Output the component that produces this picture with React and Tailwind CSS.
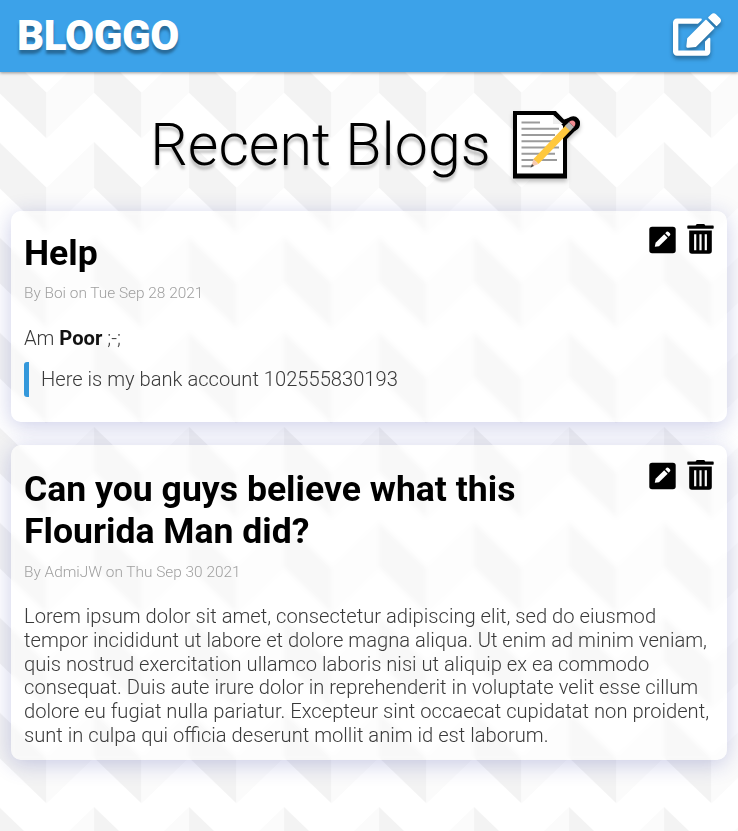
import React from "react";
import { FaEdit } from "react-icons/fa";

function Backdrop() {
  return (
    <svg className="absolute inset-0 h-full w-full" aria-hidden="true">
      <defs>
        <pattern id="chevrons" x="-0.9" y="47" width="95" height="95" patternUnits="userSpaceOnUse">
          <path d="M0 0L47.5 45.7V91.4L0 45.7Z" fill="#f3f3f3" />
          <path d="M47.5 45.7L95 0V45.7L47.5 91.4Z" fill="#fbfbfb" />
        </pattern>
      </defs>
      <rect width="100%" height="100%" fill="#fff" />
      <rect width="100%" height="100%" fill="url(#chevrons)" />
    </svg>
  );
}

function Memo() {
  return (
    <svg viewBox="0 0 68 68" className="h-[68px] w-[68px] overflow-visible" aria-hidden="true">
      <path d="M2 2H42L51.500 12L57 8.500A4.600 4.600 0 0 1 63.500 15.500L52 27V65.500H2Z" fill="#000" stroke="#000" strokeWidth="4" strokeLinejoin="miter" />
      <path d="M54 15L60 13" stroke="#000" strokeWidth="14" strokeLinecap="round" />
      <path d="M4 4H40L50 15V62.500H4Z" fill="#fff" />
      <path d="M40 4V13H50Z" fill="#eee" />
      <path d="M8.500 11.500H27M8.500 17.800H46M8.500 24H42M8.500 30.300H46M8.500 36.500H46M8.500 42.800H42M8.500 49H44M8.500 55.200H19" stroke="#9b9b9b" strokeWidth="1.900" />
      <path d="M53.500 13.500L58.500 18.500L25.500 53L20.500 48Z" fill="#ffc83d" />
      <path d="M20.500 48L25.500 53L18 56Z" fill="#f7c9b0" />
      <path d="M19 53L21 55L17.500 56.500Z" fill="#444" />
      <path d="M52 15L56 11L61 16L57 20Z" fill="#b5b5b5" />
      <path d="M56 11Q59.500 8.500 61.500 10.500Q63.500 12.500 61 16Z" fill="#f28b91" />
    </svg>
  );
}

function PencilSquare() {
  return (
    <svg viewBox="0 0 27 30" className="h-[30px] w-[27px]" aria-hidden="true">
      <rect x="0.3" y="2.700" width="26.400" height="26.600" rx="2.800" fill="#000" />
      <path d="M5.800 22.800L6.600 18.800L15.200 10.200L18.700 13.700L10 22.200Z" fill="#fff" />
      <path d="M16.200 9.200L17.600 7.800Q18.600 7 19.600 7.900L20.900 9.200Q21.900 10.200 21 11.300L19.700 12.700Z" fill="#fff" />
    </svg>
  );
}

function Trash() {
  return (
    <svg viewBox="0 0 27 30" className="h-[30px] w-[27px]" aria-hidden="true">
      <path d="M1 1.400H8.600L9.500 0.200Q9.800 0 10.200 0H16.700Q17.200 0 17.500 0.300L18.300 1.400H26Q26.700 1.400 26.700 2.200V4Q26.700 4.800 26 4.800H1Q0.300 4.800 0.300 4V2.200Q0.300 1.400 1 1.400Z" fill="#000" />
      <path fillRule="evenodd" d="M2.200 6.500H24.800V27Q24.800 29.800 22 29.800H5Q2.200 29.800 2.200 27ZM7.100 10.300V26.200H9.300V10.300ZM12.400 10.300V26.200H14.600V10.300ZM17.700 10.300V26.200H19.900V10.300Z" fill="#000" />
    </svg>
  );
}

function Card({ title, meta, children, className, titleClass, metaClass, iconClass }) {
  return (
    <article className={"relative rounded-[10px] bg-white/45 px-[13px] shadow-[0_4px_22px_rgba(31,38,155,0.23)] backdrop-blur-[2px] " + className}>
      <div className="flex justify-between">
        <h2 className={"w-[530px] text-[35.6px] leading-[42px] font-bold text-black " + titleClass}>{title}</h2>
        <div className={"flex h-[45px] gap-[11px] text-black " + iconClass}>
          <PencilSquare />
          <Trash />
        </div>
      </div>
      <p className={"text-[15.4px] leading-[18px] font-light text-[#9f9f9f] " + metaClass}>{meta}</p>
      {children}
    </article>
  );
}

export default function App() {
  return (
    <div className="relative h-[831px] w-[738px] overflow-hidden bg-white font-[Roboto,sans-serif]">
      <Backdrop />
      <div className="relative">
        <header className="flex h-[72px] items-center justify-between bg-[#3ca2e9] pr-[17px] pl-[17px] text-white shadow-[0_1px_3px_rgba(0,0,0,0.4)]">
          <span className="text-[42px] leading-[72px] font-black tracking-[-0.3px] [text-shadow:0_4px_3px_rgba(0,0,0,0.35)]">BLOGGO</span>
          <FaEdit className="mb-[3px] h-[43px] w-[48px] drop-shadow-[0_3px_2px_rgba(0,0,0,0.35)]" />
        </header>
        <h1 className="flex h-[139px] items-center justify-center gap-[22px] pt-[6px] pr-[7px] text-black">
          <span className="pt-[2px] text-[59.1px] font-light [text-shadow:0_4px_3px_rgba(0,0,0,0.25)]">Recent Blogs</span>
          <span className="drop-shadow-[0_3px_2px_rgba(0,0,0,0.25)]"><Memo /></span>
        </h1>
        <main className="flex flex-col gap-[23px] px-[11px]">
          <Card title="Help" meta="By Boi on Tue Sep 28 2021" className="h-[211px]" titleClass="pt-[21px]" metaClass="mt-[10px]" iconClass="pt-[13px]">
            <p className="mt-[24px] text-[20.15px] leading-[24px] font-light text-[#3a3a3a]">Am <b className="font-bold text-[#111]">Poor</b> ;-;</p>
            <blockquote className="mt-[12px] rounded-[3px] border-l-[5px] border-[#3498db] pl-[12px] text-[20.15px] leading-[35px] font-light text-[#3a3a3a]">Here is my bank account 102555830193</blockquote>
          </Card>
          <Card title="Can you guys believe what this Flourida Man did?" meta="By AdmiJW on Thu Sep 30 2021" className="h-[315px]" titleClass="pt-[23px]" metaClass="mt-[11px]" iconClass="pt-[15px]">
            <p className="mt-[24px] w-[700px] text-[20.17px] leading-[23.8px] font-light whitespace-nowrap text-[#3a3a3a]">
              Lorem ipsum dolor sit amet, consectetur adipiscing elit, sed do eiusmod<br />
              tempor incididunt ut labore et dolore magna aliqua. Ut enim ad minim veniam,<br />
              quis nostrud exercitation ullamco laboris nisi ut aliquip ex ea commodo<br />
              consequat. Duis aute irure dolor in reprehenderit in voluptate velit esse cillum<br />
              dolore eu fugiat nulla pariatur. Excepteur sint occaecat cupidatat non proident,<br />
              sunt in culpa qui officia deserunt mollit anim id est laborum.
            </p>
          </Card>
        </main>
      </div>
    </div>
  );
}
